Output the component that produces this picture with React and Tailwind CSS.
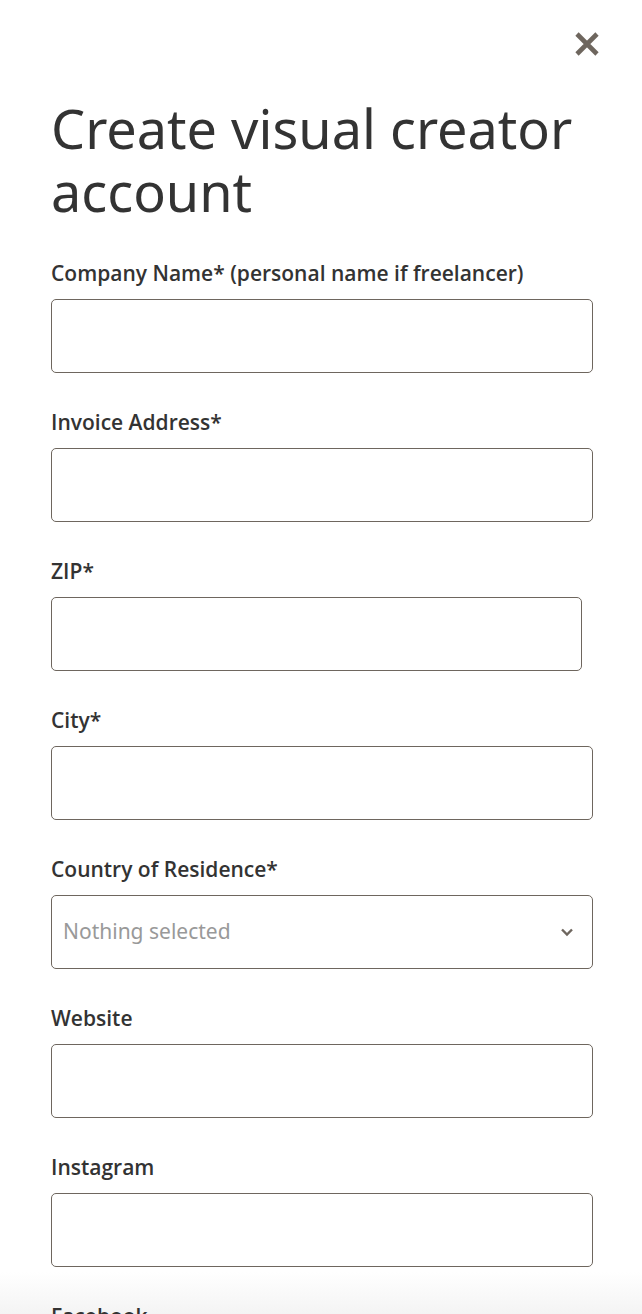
import React from "react";

const fields = [
  { label: "Company Name* (personal name if freelancer)" },
  { label: "Invoice Address*" },
  { label: "ZIP*", narrow: true },
  { label: "City*" },
  { label: "Country of Residence*", select: true },
  { label: "Website" },
  { label: "Instagram" },
  { label: "Facebook" },
];

function Field({ label, narrow, select }) {
  return (
    <div className="mb-[37px]">
      <label
        className="block text-[21px] leading-[24px] font-semibold text-[#333333] mb-[14px]"
        style={{ fontFamily: '"Open Sans", "Noto Sans", sans-serif' }}
      >
        {label}
      </label>
      {select ? (
        <div className="flex items-center justify-between h-[74px] w-[542px] rounded-[5px] border border-[#6e665e] bg-white px-[11px]">
          <span className="text-[21px] text-[#999999]">Nothing selected</span>
          <svg width="14" height="10" viewBox="0 0 14 10" className="mr-[7px]">
            <path d="M2 2.5 L7 7.5 L12 2.5" fill="none" stroke="#6e665e" strokeWidth="2.4" />
          </svg>
        </div>
      ) : (
        <input
          type="text"
          className={`block h-[74px] ${narrow ? "w-[531px]" : "w-[542px]"} rounded-[5px] border border-[#6e665e] bg-white px-[12px] text-[20px] outline-none`}
        />
      )}
    </div>
  );
}

export default function App() {
  return (
    <div
      className="h-[1314px] overflow-hidden bg-[linear-gradient(to_bottom,#ffffff_1272px,#f4f4f4_1314px)]"
      style={{ fontFamily: '"Noto Sans", "DejaVu Sans", sans-serif' }}
    >
      <div className="flex justify-end pt-[31px] pr-[42px]">
        <svg width="26" height="26" viewBox="0 0 26 26">
          <path d="M3 3 L23 23 M23 3 L3 23" stroke="#6e665e" strokeWidth="4.6" />
        </svg>
      </div>
      <div className="pl-[51px]">
        <h1 className="mt-[40px] mb-[38px] text-[54px] leading-[63px] font-normal text-[#333333]">
          Create visual creator
          <br />
          account
        </h1>
        {fields.map((f) => (
          <Field key={f.label} {...f} />
        ))}
      </div>
    </div>
  );
}
